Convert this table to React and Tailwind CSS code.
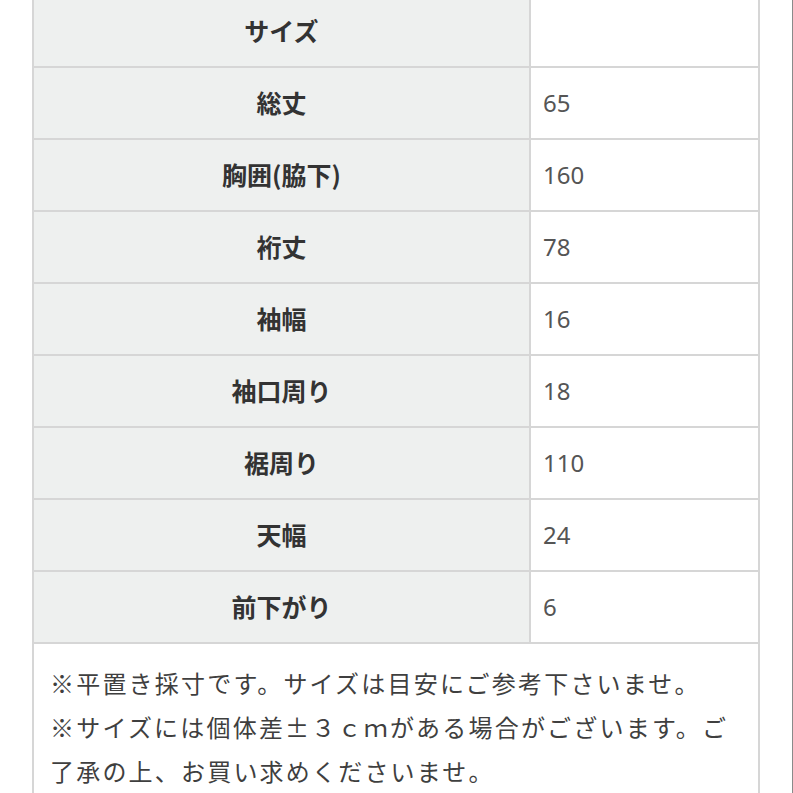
import React from 'react';

const rows = [
  { label: 'サイズ', value: '' },
  { label: '総丈', value: '65' },
  { label: '胸囲(脇下)', value: '160' },
  { label: '裄丈', value: '78' },
  { label: '袖幅', value: '16' },
  { label: '袖口周り', value: '18' },
  { label: '裾周り', value: '110' },
  { label: '天幅', value: '24' },
  { label: '前下がり', value: '6' },
];

const App = () => {
  return (
    <div
      className="w-[793px] h-[793px] overflow-hidden bg-white border-r border-[#8a8a8a]"
      style={{ fontFamily: '"Noto Sans CJK JP", "Noto Sans", sans-serif' }}
    >
      <div className="ml-[32px] w-[728px] -mt-[4px] border-x-2 border-[#d6d6d6]">
        {/* Size table */}
        {rows.map((row) => (
          <div key={row.label} className="grid grid-cols-[497px_1fr] h-[72px] border-b-2 border-[#d6d6d6]">
            <div className="flex items-center justify-center bg-[#eef0ef] border-r-2 border-[#d6d6d6] text-[25px] font-bold text-[#333]">
              {row.label}
            </div>
            <div
              className="flex items-center pl-3 bg-white text-[24px] text-[#555]"
              style={{ fontFamily: '"Noto Sans", "Noto Sans CJK JP", sans-serif' }}
            >
              {row.value}
            </div>
          </div>
        ))}

        {/* Notes */}
        <div className="pt-[17px] pl-[16px] pr-[10px] pb-6 text-[24px] leading-[44px] tracking-[2.2px] text-[#3f3f3f]">
          <p>※平置き採寸です。サイズは目安にご参考下さいませ。</p>
          <p>※サイズには個体差±３ｃｍがある場合がございます。ご了承の上、お買い求めくださいませ。</p>
        </div>
      </div>
    </div>
  );
};

export default App;
